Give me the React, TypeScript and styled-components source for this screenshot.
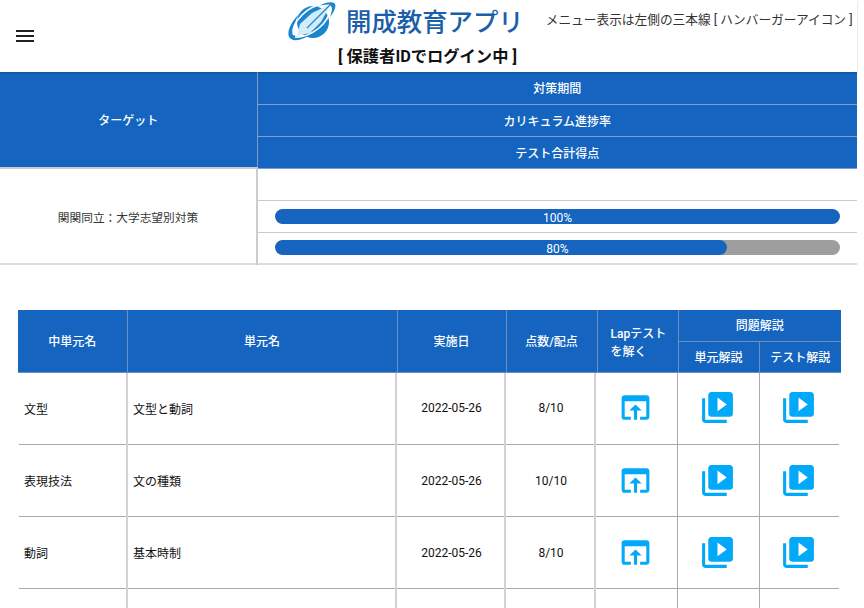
import React from "react";
import styled, { createGlobalStyle } from "styled-components";
import { MdMenu, MdOpenInBrowser, MdVideoLibrary } from "react-icons/md";

const FONT = `Roboto, "Noto Sans CJK JP", sans-serif`;

const GlobalStyle = createGlobalStyle`
  html, body {
    margin: 0;
    padding: 0;
    height: 608px;
    overflow: hidden;
    background: #fff;
  }
  body {
    font-family: ${FONT};
    color: #222;
  }
  th, td {
    box-sizing: border-box;
  }
`;

const Page = styled.div`
  width: 857px;
`;

const Header = styled.header`
  position: relative;
  z-index: 1;
  display: grid;
  grid-template-columns: 288px auto 1fr;
  grid-template-rows: 43px 29px;
  height: 72px;
  box-shadow: 0 1px 2px rgba(0, 0, 0, 0.25);
`;

const MenuButton = styled.div`
  grid-column: 1;
  grid-row: 1 / 3;
  display: flex;
  align-items: center;
  padding: 0 0 0 13px;
  margin-top: -1px;
  color: #222;
`;

const Brand = styled.div`
  display: flex;
  align-items: center;
  gap: 10px;
  white-space: nowrap;
`;

const BrandName = styled.span`
  font-size: 25.4px;
  font-weight: 500;
  line-height: 42px;
  color: #1b5ea9;
`;

const Hint = styled.div`
  font-size: 12.7px;
  line-height: 40px;
  color: #333;
  padding-left: 22px;
  white-space: nowrap;
`;

const LoginAs = styled.div`
  grid-column: 2 / 4;
  grid-row: 2;
  padding-left: 50px;
  font-size: 16.3px;
  font-weight: 700;
  line-height: 27px;
  color: #111;
`;

const TargetTable = styled.table`
  width: 857px;
  table-layout: fixed;
  border-collapse: collapse;
  font-size: 12px;
  border-bottom: 2px solid #ddd;
`;

const TargetHead = styled.th<{ $side?: boolean }>`
  height: 32px;
  padding: 0;
  background: #1565c0;
  color: #fff;
  font-weight: 500;
  font-size: 12px;
  border-bottom: 1px solid ${(p) => (p.$side ? "#1565c0" : "#7f9fca")};
  border-right: ${(p) => (p.$side ? "1px solid #7f9fca" : "0")};
`;

const TargetName = styled.td`
  padding: 0;
  text-align: center;
  font-size: 11.7px;
  color: #333;
  border-right: 2px solid #ccc;
  border-top: 2px solid #ccc;
`;

const TargetValue = styled.td`
  height: 32px;
  padding: 0 17px;
  border-top: 1px solid #ccc;
`;

const Track = styled.div`
  position: relative;
  height: 15px;
  border-radius: 8px;
  background: #9e9e9e;
  overflow: hidden;
`;

const Fill = styled.div`
  height: 100%;
  background: #1565c0;
  border-radius: 8px;
`;

const TrackLabel = styled.span`
  position: absolute;
  inset: 0;
  text-align: center;
  font-size: 12px;
  line-height: 18px;
  color: #fff;
`;

const ResultsWrap = styled.div`
  padding: 45px 0 0 18px;
`;

const ResultsHead = styled.table`
  width: 823px;
  table-layout: fixed;
  border-collapse: collapse;
  font-size: 12px;
`;

const ResultsBody = styled.table`
  width: 820px;
  margin-left: 1px;
  table-layout: fixed;
  border-collapse: collapse;
  font-size: 12px;
`;

const HeadCell = styled.th<{ $left?: boolean }>`
  padding: ${(p) => (p.$left ? "4px 0 0 13px" : "2px 0 0")};
  height: 31px;
  background: #1565c0;
  color: #fff;
  font-weight: 500;
  font-size: 12px;
  line-height: 18px;
  text-align: ${(p) => (p.$left ? "left" : "center")};
  border-right: 1px solid #6c8fbf;
  border-bottom: 1px solid #6c8fbf;
  &:last-child {
    border-right: 0;
  }
`;

const Row = styled.tr`
  height: 72px;
`;

const Cell = styled.td<{ $center?: boolean }>`
  padding: ${(p) => (p.$center ? "0 5px 0 7px" : "0 5px")};
  color: #111;
  text-align: ${(p) => (p.$center ? "center" : "left")};
  border-right: 2px solid #d2d2d2;
  border-bottom: 1px solid #aaa;
`;

const IconCell = styled.td`
  padding: 0 2px 1px 0;
  color: #03a9f9;
  text-align: center;
  line-height: 0;
  border-right: 1px solid #aaa;
  border-bottom: 1px solid #aaa;
  &:last-child {
    border-right: 0;
  }
`;

const Logo = () => (
  <svg width="48" height="40" viewBox="0 0 48 40">
    <circle cx="25" cy="20" r="16" fill="#1a86d0" />
    <path d="M3 37C-3 33 2 21 11 12 7 20 3 29 6 33 9 36 17 35 24 31 17 37 8 40 3 37z" fill="#1a86d0" />
    <path d="M46 1C49 3 47 9 42 15 44 9 45 5 42 3 39 2 34 3 29 5 35 1 43-1 46 1z" fill="#1a86d0" />
    <path d="M6 33C3 29 7 20 14 13S28 3 34 3" fill="none" stroke="#fff" strokeWidth="1.6" />
    <path d="M7 35C14 36 24 32 31 26S42 12 43 6" fill="none" stroke="#fff" strokeWidth="1.6" />
    <path d="M43 2 33 20 22 31 9 34 12 22 24 11z" fill="#d3ecf9" />
    <path d="M43 2 19 26" stroke="#1a86d0" strokeWidth="1.1" />
  </svg>
);

const rows = [
  ["文型", "文型と動詞", "2022-05-26", "8/10"],
  ["表現技法", "文の種類", "2022-05-26", "10/10"],
  ["動詞", "基本時制", "2022-05-26", "8/10"],
];

const App = () => (
  <Page>
    <GlobalStyle />
    <Header>
      <MenuButton>
        <MdMenu size={24} />
      </MenuButton>
      <Brand>
        <Logo />
        <BrandName>開成教育アプリ</BrandName>
      </Brand>
      <Hint>メニュー表示は左側の三本線 [ ハンバーガーアイコン ]</Hint>
      <LoginAs>[ 保護者IDでログイン中 ]</LoginAs>
    </Header>

    <TargetTable>
      <colgroup>
        <col style={{ width: 257 }} />
        <col />
      </colgroup>
      <tbody>
        <tr>
          <TargetHead $side rowSpan={3}>
            ターゲット
          </TargetHead>
          <TargetHead>対策期間</TargetHead>
        </tr>
        <tr>
          <TargetHead>カリキュラム進捗率</TargetHead>
        </tr>
        <tr>
          <TargetHead>テスト合計得点</TargetHead>
        </tr>
        <tr>
          <TargetName rowSpan={3}>関関同立：大学志望別対策</TargetName>
          <TargetValue />
        </tr>
        <tr>
          <TargetValue>
            <Track>
              <Fill style={{ width: "100%" }} />
              <TrackLabel>100%</TrackLabel>
            </Track>
          </TargetValue>
        </tr>
        <tr>
          <TargetValue>
            <Track>
              <Fill style={{ width: "80%" }} />
              <TrackLabel>80%</TrackLabel>
            </Track>
          </TargetValue>
        </tr>
      </tbody>
    </TargetTable>

    <ResultsWrap>
      <ResultsHead>
        <colgroup>
          <col style={{ width: 109 }} />
          <col style={{ width: 270 }} />
          <col style={{ width: 109 }} />
          <col style={{ width: 91 }} />
          <col style={{ width: 81 }} />
          <col style={{ width: 81 }} />
          <col style={{ width: 82 }} />
        </colgroup>
        <thead>
          <tr>
            <HeadCell rowSpan={2}>中単元名</HeadCell>
            <HeadCell rowSpan={2}>単元名</HeadCell>
            <HeadCell rowSpan={2}>実施日</HeadCell>
            <HeadCell rowSpan={2}>点数/配点</HeadCell>
            <HeadCell $left rowSpan={2}>
              Lapテスト
              <br />
              を解く
            </HeadCell>
            <HeadCell colSpan={2}>問題解説</HeadCell>
          </tr>
          <tr>
            <HeadCell>単元解説</HeadCell>
            <HeadCell>テスト解説</HeadCell>
          </tr>
        </thead>
      </ResultsHead>
      <ResultsBody>
        <colgroup>
          <col style={{ width: 108 }} />
          <col style={{ width: 269 }} />
          <col style={{ width: 109 }} />
          <col style={{ width: 90 }} />
          <col style={{ width: 82 }} />
          <col style={{ width: 82 }} />
          <col style={{ width: 80 }} />
        </colgroup>
        <tbody>
          {rows.map((r) => (
            <Row key={r[0]}>
              <Cell>{r[0]}</Cell>
              <Cell>{r[1]}</Cell>
              <Cell $center>{r[2]}</Cell>
              <Cell $center>{r[3]}</Cell>
              <IconCell>
                <MdOpenInBrowser size={37} />
              </IconCell>
              <IconCell>
                <MdVideoLibrary size={37} />
              </IconCell>
              <IconCell>
                <MdVideoLibrary size={37} />
              </IconCell>
            </Row>
          ))}
          <Row>
            <Cell />
            <Cell />
            <Cell />
            <Cell />
            <IconCell />
            <IconCell />
            <IconCell />
          </Row>
        </tbody>
      </ResultsBody>
    </ResultsWrap>
  </Page>
);

export default App;
